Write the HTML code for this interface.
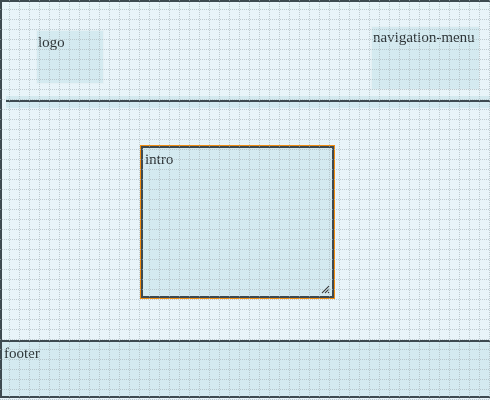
<!DOCTYPE html>
<html><head><style>
html,body{margin:0;padding:0;width:490px;height:400px;overflow:hidden;background:#e8f4f9;font-family:"Liberation Serif",serif;font-size:15px;color:#2e3538;position:relative}
div{position:absolute;box-sizing:border-box}
</style></head><body>
<div style="left:0;top:0;width:492px;height:342px;border-top:2px solid #3e4a50;border-left:2px solid #3e4a50"></div>
<div style="left:6px;top:96px;width:490px;height:12px;background:#d4eaf0"></div>
<div style="left:6px;top:100px;width:490px;height:2px;background:#3e4a50"></div>
<div style="left:36px;top:30px;width:68px;height:54px;background:#d4eaf0;border:1px solid #e4f0f4;padding:4px 0 0 1px">logo</div>
<div style="left:371px;top:26px;width:109px;height:64px;background:#d4eaf0;border:1px solid #e4f0f4;padding:3px 0 0 1px">navigation-menu</div>
<div style="left:140px;top:145px;width:195px;height:154px;border:1px solid #f08c10"></div>
<div style="left:141px;top:146px;width:193px;height:152px;border:2px solid #3e4a50;background:#d4eaf0;padding:4px 0 0 2px">intro
<svg style="position:absolute;right:2px;bottom:2px" width="9" height="9"><path d="M8 1L1 8M8 4L4 8M8 7L7 8" stroke="#333" stroke-width="1"/></svg></div>
<div style="left:0;top:340px;width:492px;height:58px;border-top:2px solid #3e4a50;border-bottom:2px solid #3e4a50;border-left:2px solid #3e4a50;background:#d4eaf0;padding:4px 0 0 2px">footer</div>
<svg style="position:absolute;left:0;top:0" width="490" height="400">
<defs><pattern id="g" width="10" height="10" patternUnits="userSpaceOnUse">
<path d="M9.5 0V10M0 9.5H10" stroke="#a8b4b8" stroke-width="1" stroke-dasharray="1 1"/></pattern></defs>
<rect width="490" height="400" fill="url(#g)" opacity="0.65"/>
</svg>
</body></html>
